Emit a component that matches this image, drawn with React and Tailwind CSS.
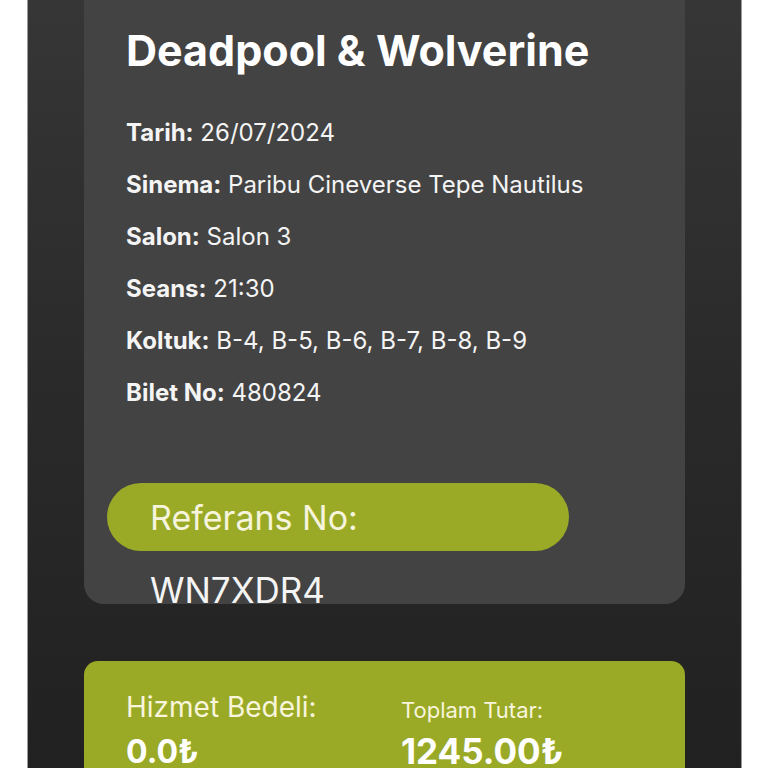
import React from "react";

const rows = [
  ["Tarih:", "26/07/2024"],
  ["Sinema:", "Paribu Cineverse Tepe Nautilus"],
  ["Salon:", "Salon 3"],
  ["Seans:", "21:30"],
  ["Koltuk:", "B-4, B-5, B-6, B-7, B-8, B-9"],
  ["Bilet No:", "480824"],
];

export default function App() {
  return (
    <div className="w-[768px] h-[768px] overflow-hidden bg-white flex" style={{ fontFamily: "Inter, 'Noto Sans', sans-serif" }}>
      <div className="ml-[27px] w-[715px] h-full border-x border-[#9a9a9a] bg-gradient-to-b from-[#363636] via-[#2a2a2a] to-[#212121] px-[56px] flex flex-col">
        <div className="w-[601px] h-[604px] shrink-0 bg-[#434343] rounded-b-[20px] overflow-hidden flex flex-col">
          <h1 className="mt-[26px] ml-[42px] text-[43px] leading-[48px] font-bold text-white whitespace-nowrap">
            Deadpool &amp; Wolverine
          </h1>
          <div className="mt-[44px] ml-[42px] flex flex-col gap-[22px]">
            {rows.map(([k, v]) => (
              <div key={k} className="text-[24px] leading-[30px] text-[#f4f4f4] whitespace-nowrap">
                <span className="font-bold">{k}</span> {v}
              </div>
            ))}
          </div>
          <div className="mt-[75px] ml-[23px] w-[462px] h-[68px] shrink-0 rounded-full bg-[#9aaa27] flex items-center pl-[43px]">
            <span className="text-[34px] text-[#f6f4dc] whitespace-nowrap">Referans No:</span>
          </div>
          <div className="mt-[19px] ml-[66px] text-[35px] leading-[40px] text-[#f4f4f4] whitespace-nowrap">
            WN7XDR4
          </div>
        </div>
        <div className="mt-[57px] w-[601px] h-[140px] shrink-0 bg-[#9aaa27] rounded-t-[14px] flex pl-[42px] pt-[28px] text-[#f8f5dc]">
          <div className="w-[275px] flex flex-col">
            <div className="text-[28px] leading-[36px] whitespace-nowrap">Hizmet Bedeli:</div>
            <div className="mt-[7px] text-[32px] leading-[40px] font-bold text-white whitespace-nowrap">0.0₺</div>
          </div>
          <div className="flex flex-col">
            <div className="mt-[6px] text-[22px] leading-[30px] whitespace-nowrap">Toplam Tutar:</div>
            <div className="mt-[5px] text-[35px] leading-[42px] font-bold text-white whitespace-nowrap">1245.00₺</div>
          </div>
        </div>
      </div>
    </div>
  );
}
